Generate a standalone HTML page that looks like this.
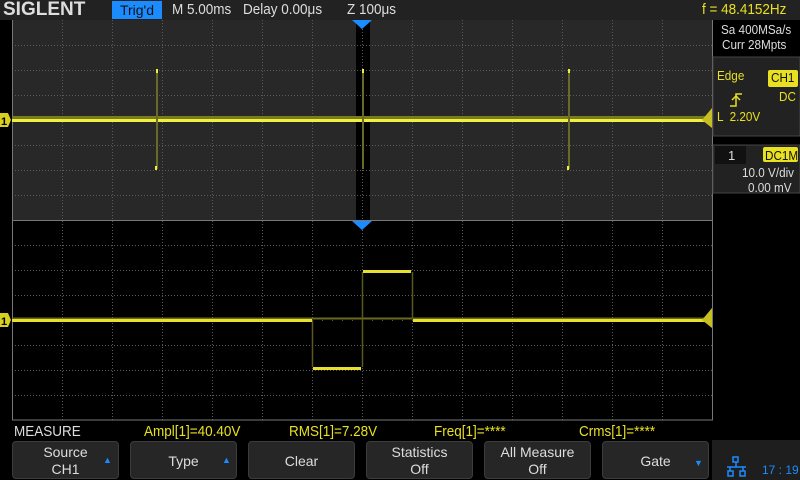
<!DOCTYPE html>
<html><head><meta charset="utf-8"><style>
*{margin:0;padding:0;box-sizing:border-box}
body{width:800px;height:480px;background:#000;position:relative;overflow:hidden;font-family:"Liberation Sans",sans-serif;color:#ddd}
.a{position:absolute;white-space:nowrap}
.n{transform:scaleX(0.9);transform-origin:0 0}
.btn{position:absolute;top:441px;width:107px;height:38px;background:#262626;border:1px solid #3c3c3c;border-radius:4px;color:#ddd;font-size:14px;text-align:center;line-height:17px}
.y{color:#e8e020}
</style></head><body>
<div class="a" style="left:0;top:0;width:800px;height:20px;background:#222"></div>
<div class="a" style="left:3px;top:-1px;font-size:19px;font-weight:bold;color:#ddd">SIGLENT</div>
<div class="a" style="left:112px;top:1px;width:50px;height:18px;background:#1a8cff;color:#111;font-size:14px;text-align:center;line-height:18px">Trig'd</div>
<div class="a n" style="left:172px;top:0;font-size:15px;color:#ddd;line-height:20px">M 5.00ms</div>
<div class="a n" style="left:243px;top:0;font-size:15px;color:#ddd;line-height:20px">Delay 0.00μs</div>
<div class="a n" style="left:347px;top:0;font-size:15px;color:#ddd;line-height:20px">Z 100μs</div>
<div class="a y n" style="left:702px;top:0;font-size:15px;line-height:20px">f = 48.4152Hz</div>

<svg class="a" style="left:0;top:0" width="800" height="480">
<rect x="12" y="20" width="700" height="200" fill="#282828"/>
<rect x="356" y="20" width="14" height="200" fill="#000"/>
<rect x="12" y="220" width="700" height="200" fill="#000"/>
<g stroke="#5a5a5a" stroke-width="1" stroke-dasharray="1,2">
<path d="M62.5 20V420M112.5 20V420M162.5 20V420M212.5 20V420M262.5 20V420M312.5 20V420M362.5 20V420M412.5 20V420M462.5 20V420M512.5 20V420M562.5 20V420M612.5 20V420M662.5 20V420"/>
<path d="M12 45.5H712M12 70.5H712M12 95.5H712M12 145.5H712M12 170.5H712M12 195.5H712M12 245.5H712M12 270.5H712M12 295.5H712M12 345.5H712M12 370.5H712M12 395.5H712"/>
</g>
<g stroke="#5a5a5a" stroke-width="1" stroke-dasharray="1,9">
<path d="M12 120.5H712M12 320.5H712"/>
</g>
<path d="M12.5 20V420H712.5V20" fill="none" stroke="#777"/>
<path d="M12 220.5H712" stroke="#777"/>
<rect x="12" y="116" width="700" height="3" fill="#7a7a20"/>
<rect x="12" y="119" width="700" height="3" fill="#f0f040"/>
<g stroke="#6a6a28" stroke-width="2">
<path d="M157 70V169M363 70V169M569 70V169"/>
</g>
<g fill="#f0f040"><rect x="156" y="69" width="2" height="4"/><rect x="155" y="166" width="2" height="4"/><rect x="362" y="69" width="2" height="4"/><rect x="568" y="69" width="2" height="4"/><rect x="567" y="166" width="2" height="4"/></g>
<path d="M12 318.5H712" stroke="#6a6a20" stroke-width="2"/>
<path d="M312.5 321V367M362.5 272V367M412.5 272V319" stroke="#5a5a20" stroke-width="1.5"/>
<g stroke="#e8e030" stroke-width="3">
<path d="M12 320.5H312M313 368.5H361M363 271.5H411M413 320.5H712"/>
</g>
<path d="M352 20H372L362 29Z" fill="#1a8cff"/>
<path d="M352 221H372L362 230Z" fill="#1a8cff"/>
<path d="M0 113H8L11 120L8 127H0Z" fill="#d8d020"/>
<path d="M0 313H8L11 320L8 327H0Z" fill="#d8d020"/>
<text x="1" y="125" font-size="11" font-weight="bold" fill="#000" font-family="Liberation Sans">1</text>
<text x="1" y="325" font-size="11" font-weight="bold" fill="#000" font-family="Liberation Sans">1</text>
<path d="M712 108L702 120L712 128Z" fill="#c8c020"/>
<path d="M712 308L702 320L712 328Z" fill="#c8c020"/>
<rect x="713" y="57" width="87" height="79" fill="#222" stroke="#444"/>
<rect x="713" y="145" width="87" height="48" fill="#222" stroke="#444"/>
<rect x="715" y="146" width="31" height="18" fill="#111"/>
<rect x="768" y="70" width="30" height="17" rx="2" fill="#e8e020"/>
<rect x="763" y="147" width="35" height="15" rx="2" fill="#e8e020"/>
<path d="M730 106H736V94H742" fill="none" stroke="#e8e020" stroke-width="1.5"/>
<path d="M732 100L736 96L740 100" fill="none" stroke="#e8e020" stroke-width="1.5"/>
<rect x="712" y="440" width="88" height="40" fill="#1e1e1e"/>
<g fill="none" stroke="#1a8cff" stroke-width="1.5"><rect x="733" y="457" width="5" height="5"/><rect x="728" y="471" width="5" height="5"/><rect x="740" y="471" width="5" height="5"/><path d="M736 462V467M727 467H746M730 467V471M743 467V471"/></g>
</svg>

<div class="a n" style="left:721px;top:22px;font-size:13px;color:#ddd">Sa 400MSa/s</div>
<div class="a n" style="left:722px;top:37px;font-size:13px;color:#ddd">Curr 28Mpts</div>
<div class="a y n" style="left:717px;top:68px;font-size:13px">Edge</div>
<div class="a n" style="left:771px;top:70px;font-size:13px;color:#111">CH1</div>
<div class="a y n" style="left:779px;top:89px;font-size:13px">DC</div>
<div class="a y n" style="left:717px;top:109px;font-size:13px">L &nbsp;2.20V</div>
<div class="a" style="left:728px;top:148px;font-size:13px;color:#ddd">1</div>
<div class="a n" style="left:765px;top:148px;font-size:13px;color:#111">DC1M</div>
<div class="a n" style="left:742px;top:165px;font-size:13px;color:#ddd">10.0 V/div</div>
<div class="a n" style="left:748px;top:180px;font-size:13px;color:#ddd">0.00 mV</div>

<div class="a n" style="left:14px;top:423px;font-size:15px;color:#ddd">MEASURE</div>
<div class="a y n" style="left:144px;top:423px;font-size:15px">Ampl[1]=40.40V</div>
<div class="a y n" style="left:289px;top:423px;font-size:15px">RMS[1]=7.28V</div>
<div class="a y n" style="left:434px;top:423px;font-size:15px">Freq[1]=****</div>
<div class="a y n" style="left:579px;top:423px;font-size:15px">Crms[1]=****</div>

<div class="btn" style="left:12px;padding-top:2px">Source<br>CH1</div>
<div class="btn" style="left:130px;line-height:38px">Type</div>
<div class="btn" style="left:248px;line-height:38px">Clear</div>
<div class="btn" style="left:366px;padding-top:2px">Statistics<br>Off</div>
<div class="btn" style="left:484px;padding-top:2px">All Measure<br>Off</div>
<div class="btn" style="left:602px;line-height:38px">Gate</div>
<div class="a" style="left:103px;top:455px;font-size:9px;color:#1a8cff">▲</div>
<div class="a" style="left:222px;top:455px;font-size:9px;color:#1a8cff">▲</div>
<div class="a" style="left:694px;top:458px;font-size:9px;color:#1a8cff">▼</div>
<div class="a" style="left:762px;top:463px;font-size:12px;color:#1a8cff">17 : 19</div>
</body></html>
